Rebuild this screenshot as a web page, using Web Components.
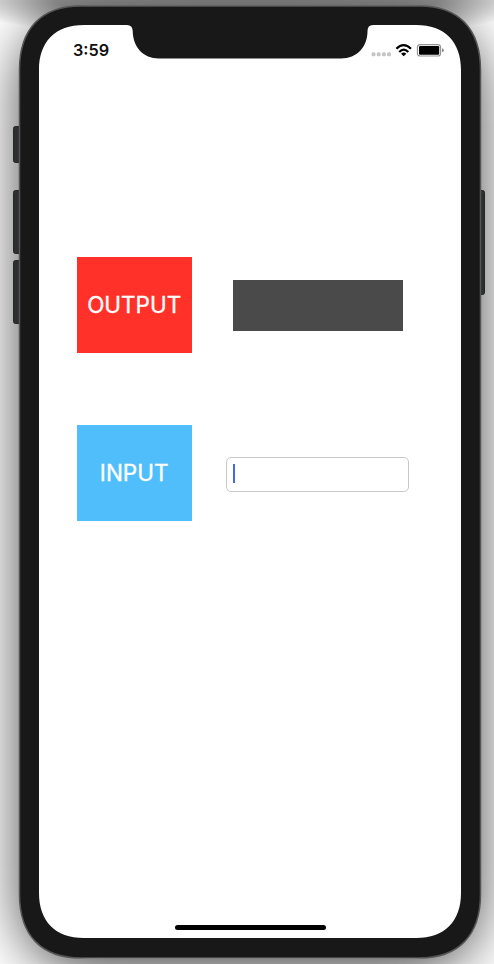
<!DOCTYPE html>
<html lang="en">
<head>
<meta charset="utf-8">
<title>Phone</title>
<style>
body{margin:0;font-family:Inter,"Liberation Sans",sans-serif}
</style>
</head>
<body>
<phone-stage>
  <phone-device>
    <status-bar slot="status" time="3:59"></status-bar>
    <io-row><color-tile style="--tile:#ff3129">OUTPUT</color-tile><output-box></output-box></io-row>
    <io-row><color-tile style="--tile:#50befb">INPUT</color-tile><text-entry></text-entry></io-row>
  </phone-device>
</phone-stage>
<script>
function define(name, html, setup){
  const t=document.createElement('template');
  t.innerHTML=html;
  customElements.define(name,class extends HTMLElement{
    constructor(){
      super();
      this.attachShadow({mode:'open'}).append(t.content.cloneNode(true));
    }
    connectedCallback(){ if(setup) setup(this); }
  });
}

define('phone-stage',`<style>
:host{display:block;box-sizing:border-box;width:494px;height:964px;padding:5px 13px 0 19px;overflow:hidden;
background:radial-gradient(ellipse 300px 46px at 247px -4px,#0000006e 0,#00000068 65%,#0000 100%) no-repeat,#fff}
</style><slot></slot>`);

define('phone-device',`<style>
:host{display:block;position:relative;width:462px;height:954px;border-radius:70px;box-shadow:0 12px 56px rgba(0,0,0,.7)}
svg{position:absolute;left:-19px;top:-5px}
.screen{position:relative;box-sizing:border-box;width:422px;height:913px;margin-left:20px;padding-top:20px;display:flex;flex-direction:column}
main{display:flex;flex-direction:column;gap:72px;padding:189px 0 0 37.700px}
.home{width:151px;height:5px;border-radius:3px;background:#000;margin:auto auto -12px 135.500px}
</style>
<svg width="494" height="964" viewBox="0 0 494 964">
<g fill="#2c2e2f" stroke="#242627" stroke-width="1">
<rect x="13.500" y="126.500" width="9" height="36" rx="2"/>
<rect x="13.500" y="190.500" width="9" height="63" rx="2"/>
<rect x="13.500" y="260.500" width="9" height="63" rx="2"/>
<rect x="477" y="190.500" width="7.500" height="104" rx="2"/>
</g>
<path fill="#181818" stroke="#555" stroke-width="1.500" d="M81 6H419C459 6 480.500 29 480.500 70V894C480.500 935 459 958 419 958H81C41 958 19.500 935 19.500 894V70C19.500 29 41 6 81 6Z"/>
<path fill="#fff" d="M84 25H127Q132.500 25 132.700 31C133 47 143 58.500 159 58.500H341C357 58.500 367.500 47 367.500 31Q367.500 25 373 25H416C445 25 461 42 461 70V893C461 921 445 938 416 938H84C55 938 39 921 39 893V70C39 42 55 25 84 25Z"/>
</svg>
<div class="screen"><slot name="status"></slot><main><slot></slot></main><div class="home"></div></div>`);

define('status-bar',`<style>
:host{display:flex;align-items:center;justify-content:space-between;height:43px;padding:7px 17px 0 34px;box-sizing:border-box;color:#111}
span{font:600 16.300px/20px Inter,"Liberation Sans",sans-serif}
svg{display:block}
</style><span></span>
<svg width="74" height="18" viewBox="370 41 74 18">
<g fill="#c5c5c5"><rect x="371.500" y="52.300" width="4" height="4" rx="1.500"/><rect x="376.700" y="52.300" width="4" height="4" rx="1.500"/><rect x="381.900" y="52.300" width="4" height="4" rx="1.500"/><rect x="387" y="52.300" width="4" height="4" rx="1.500"/></g>
<g fill="none" stroke="#000" stroke-width="2.200"><path d="M396.400 48.800Q403.500 41.500 411 48.800"/><path d="M399.200 52Q403.700 47.300 408.300 52"/></g>
<path d="M403.700 56.300L401.100 53.700Q403.700 51.400 406.300 53.700Z"/>
<rect x="417.400" y="44.600" width="23.200" height="11.400" rx="2.800" fill="#fff" stroke="#929292" stroke-width="1.100"/>
<rect x="419" y="46" width="20.200" height="8.700" rx="1.200"/>
<path fill="#888" d="M442 48.200Q443.800 48.700 443.800 50.200T442 52.200Z"/>
</svg>`,el=>el.shadowRoot.querySelector('span').textContent=el.getAttribute('time'));

define('io-row',`<style>:host{display:flex;align-items:center;height:96px}</style><slot></slot>`);

define('color-tile',`<style>
:host{display:flex;align-items:center;justify-content:center;width:115px;height:96px;background:var(--tile);color:#fff;font:22.500px/28px Inter,"Liberation Sans",sans-serif;-webkit-text-stroke:.35px #fff}
</style><slot></slot>`);

define('output-box',`<style>
:host{display:block;box-sizing:border-box;width:170px;height:51px;margin-left:41px;background:#4a4a4a}
</style>`);

define('text-entry',`<style>
:host{display:flex;align-items:center;box-sizing:border-box;width:183px;height:35px;margin:2px 0 0 34px;padding-left:6px;border:1px solid #c9c9c9;border-radius:5px;background:#fff}
i{width:2px;height:19px;background:#4468ee;margin-top:-1px}
</style><i></i>`);
</script>
</body>
</html>
